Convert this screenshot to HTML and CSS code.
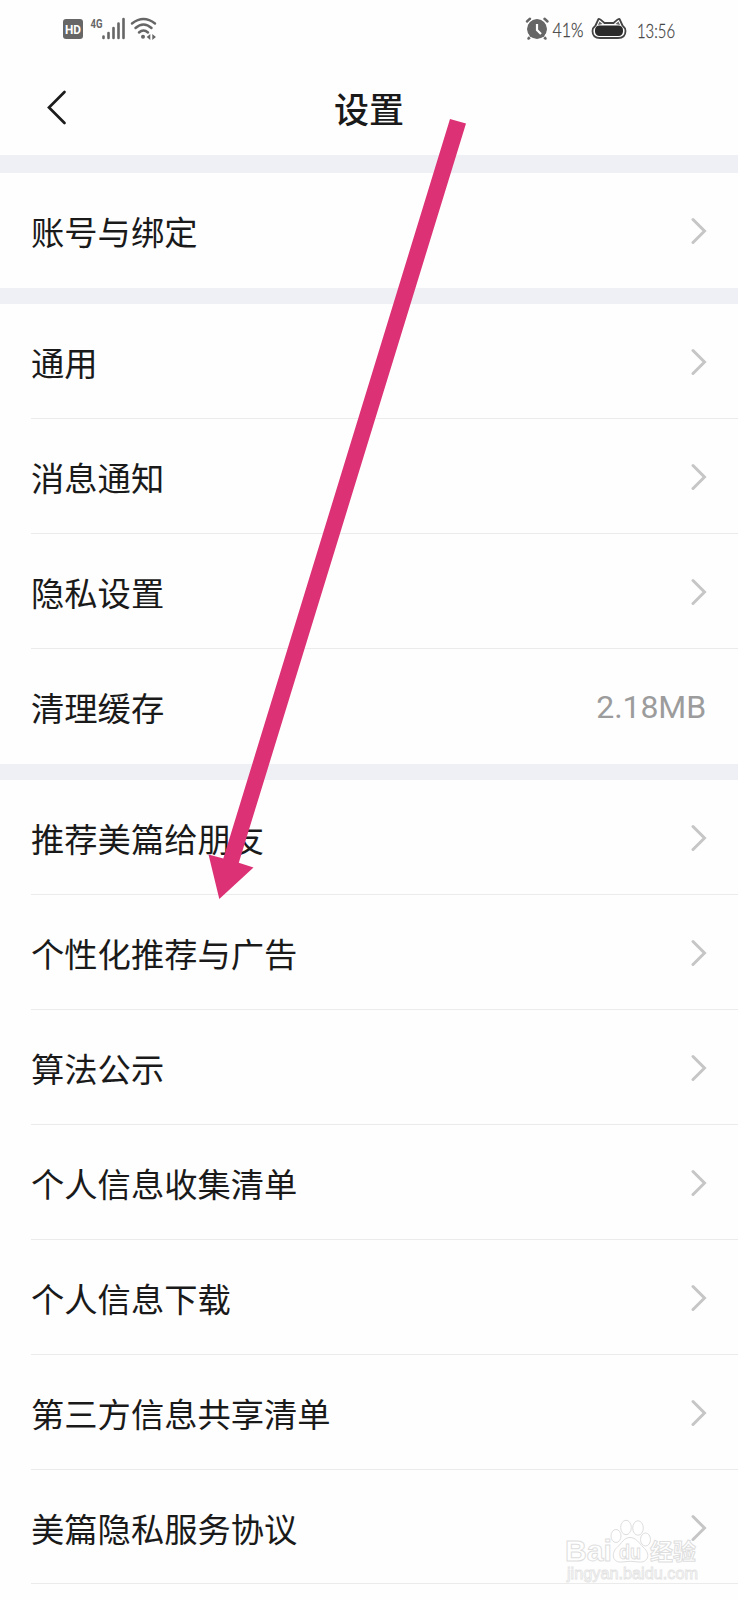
FILE: index.html
```html
<!DOCTYPE html>
<html lang="zh-CN">
<head>
<meta charset="utf-8">
<title>设置</title>
<link rel="stylesheet" href="styles.css">
</head>
<body>
<svg class="defs" width="0" height="0"><defs>
<symbol id="chev" viewBox="0 0 16 28"><path d="M2 2.500 13.500 14 2 25.500" fill="none" stroke="#c6c6c6" stroke-width="3" stroke-linecap="round" stroke-linejoin="miter"/></symbol>
</defs></svg>
<div class="screen">
<div class="status">
<svg width="738" height="58" viewBox="0 0 738 58">
<rect x="63" y="19" width="20" height="20" rx="3" fill="#666"/>
<text class="hd" x="65" y="33.500" textLength="16" lengthAdjust="spacingAndGlyphs">HD</text>
<text class="net" x="90.500" y="27.500" textLength="12" lengthAdjust="spacingAndGlyphs">4G</text>
<path d="M103.500 36.500v1.500M108.500 33v5M113.500 28v10M118.500 23.500V38M123.500 19v19" stroke="#666" stroke-width="2.600" stroke-linecap="round"/>
<g fill="none" stroke="#666" stroke-width="2.500" stroke-linecap="round"><path d="M132 23.500Q143.500 14.500 155 23.500M135.500 28Q143.500 21 151.500 28M139 32.500Q143.500 28.500 148 32.500"/></g>
<circle cx="143" cy="36.700" r="2" fill="#666"/>
<path d="M150.300 34v6l-3.600-3zM152.300 34v6l3.600-3z" fill="#666"/>
<circle cx="537" cy="29" r="10" fill="#666"/>
<path d="M527 21.500 530 18.800M547.500 21.500 544.500 18.800M530.500 36.500 528.500 38.500M543.500 36.500 545.500 38.500" stroke="#666" stroke-width="2.500" stroke-linecap="round"/>
<circle cx="537" cy="29" r="10.800" fill="none" stroke="#fefefe" stroke-width="1"/>
<path d="M537 24v6l4 4" stroke="#fff" stroke-width="2.200" fill="none"/>
<text class="thin" x="552.500" y="37" textLength="31" lengthAdjust="spacingAndGlyphs">41%</text>
<path d="M595.500 25.500 598.500 19Q599.500 18.500 604.500 23H613.500Q618.500 18.500 619.500 19L622.500 25.500Q625.500 28 625.500 31Q625.500 38 618 38H600Q592.500 38 592.500 31Q592.500 28 595.500 25.500Z" fill="#fff" stroke="#444" stroke-width="1.800" stroke-linejoin="round"/>
<path d="M598 25 599.500 21.500 602.500 24ZM620 25 618.500 21.500 615.500 24Z" fill="#666"/>
<rect x="595" y="25.500" width="28" height="10.500" rx="4.500" fill="#2b2b2b"/>
<text class="thin" x="637" y="37.500" textLength="38" lengthAdjust="spacingAndGlyphs">13:56</text>
</svg>
</div>
<header class="head">
<svg class="back" width="24" height="40" viewBox="0 0 24 40"><path d="M19.500 4 4 19.500 19.500 35" fill="none" stroke="#1c1c1c" stroke-width="2.700" stroke-linecap="round" stroke-linejoin="miter"/></svg>
<h1 class="title">设置</h1>
</header>
<section class="group first">
<div class="row"><span>账号与绑定</span><svg class="chev"><use href="#chev"/></svg></div>
</section>
<section class="group">
<div class="row"><span>通用</span><svg class="chev"><use href="#chev"/></svg></div>
<div class="row"><span>消息通知</span><svg class="chev"><use href="#chev"/></svg></div>
<div class="row"><span>隐私设置</span><svg class="chev"><use href="#chev"/></svg></div>
<div class="row"><span>清理缓存</span><span class="value">2.18MB</span></div>
</section>
<section class="group">
<div class="row"><span>推荐美篇给朋友</span><svg class="chev"><use href="#chev"/></svg></div>
<div class="row"><span>个性化推荐与广告</span><svg class="chev"><use href="#chev"/></svg></div>
<div class="row"><span>算法公示</span><svg class="chev"><use href="#chev"/></svg></div>
<div class="row"><span>个人信息收集清单</span><svg class="chev"><use href="#chev"/></svg></div>
<div class="row"><span>个人信息下载</span><svg class="chev"><use href="#chev"/></svg></div>
<div class="row"><span>第三方信息共享清单</span><svg class="chev"><use href="#chev"/></svg></div>
<div class="row last"><span>美篇隐私服务协议</span><svg class="chev"><use href="#chev"/></svg></div>
</section>
<svg class="overlay" width="738" height="1600" viewBox="0 0 738 1600">
<path d="M450 119 466 123.500 238.800 862.800 253.500 867.500 219.300 899 208.500 854.500 223.300 858.500Z" fill="#dc3275"/>
<g class="mark">
<text class="logo" x="565" y="1561" textLength="47" lengthAdjust="spacingAndGlyphs">Bai</text>
<ellipse cx="616" cy="1536" rx="5" ry="6.500"/><ellipse cx="626" cy="1527.500" rx="5.300" ry="7.200"/><ellipse cx="638" cy="1528" rx="5.300" ry="7.200"/><ellipse cx="645.500" cy="1539.500" rx="5" ry="6.500"/>
<path d="M630 1537.500C636 1537.500 639 1543 643 1547C652 1555 647 1563 639 1562Q630 1560.500 622 1562C612 1563 611 1553 617 1547.500C622 1543 624 1537.500 630 1537.500Z"/>
<text class="du" x="619" y="1558.500" textLength="22" lengthAdjust="spacingAndGlyphs">du</text>
<text class="jy" x="650" y="1560" textLength="46" lengthAdjust="spacingAndGlyphs">经验</text>
<text class="url" x="567" y="1579" textLength="131" lengthAdjust="spacingAndGlyphs">jingyan.baidu.com</text>
</g>
</svg>
</div>
</body>
</html>
```
FILE: styles.css
```css
* { box-sizing: border-box; }
body { margin: 0; background: #fefefe; font-family: "Noto Sans CJK SC", sans-serif; color: #1a1a1a; }
.defs { position: absolute; }
.screen { position: relative; width: 738px; height: 1600px; overflow: hidden; }
.status { height: 58px; }
.status svg { display: block; }
.hd { font: 700 12.5px Roboto, sans-serif; fill: #fff; }
.net { font: 700 12px Roboto, sans-serif; fill: #666; }
.thin { font: 300 20.5px Lato, sans-serif; fill: #444; stroke: #444; stroke-width: 0.3px; }
.head { height: 97px; display: grid; grid-template-columns: 80px 1fr 80px; align-items: center; }
.back { margin-left: 45px; margin-top: 3px; }
.title { margin: 3px 0 0; text-align: center; font-size: 35px; line-height: 50px; font-weight: 500; }
.group { border-top: 16px solid #eff0f5; }
.first { border-top-width: 18px; }
.row { height: 115px; margin-left: 31px; padding-right: 31px; display: flex; align-items: center; justify-content: space-between; border-bottom: 1px solid #ebebeb; font-size: 33.3px; line-height: 48px; padding-top: 2px; }
.row:last-child { border-bottom-color: transparent; }
.row.last { height: 114px; border-bottom-color: #ebebeb; }
.chev { width: 16px; height: 28px; }
.value { font: 400 32px/40px Roboto, sans-serif; color: #9c9c9c; margin-right: 1px; letter-spacing: -0.1px; }
.overlay { position: absolute; left: 0; top: 0; }
.mark { fill: #fff; stroke: #dedede; stroke-width: 1px; }
.logo { font: 700 30px "Liberation Sans", sans-serif; }
.du { font: 700 21px "Liberation Sans", sans-serif; }
.jy { font: 700 23px "Noto Sans CJK SC", sans-serif; }
.url { font: 400 16px "Liberation Sans", sans-serif; stroke: #e3e3e3; stroke-width: 0.8px; }
```
